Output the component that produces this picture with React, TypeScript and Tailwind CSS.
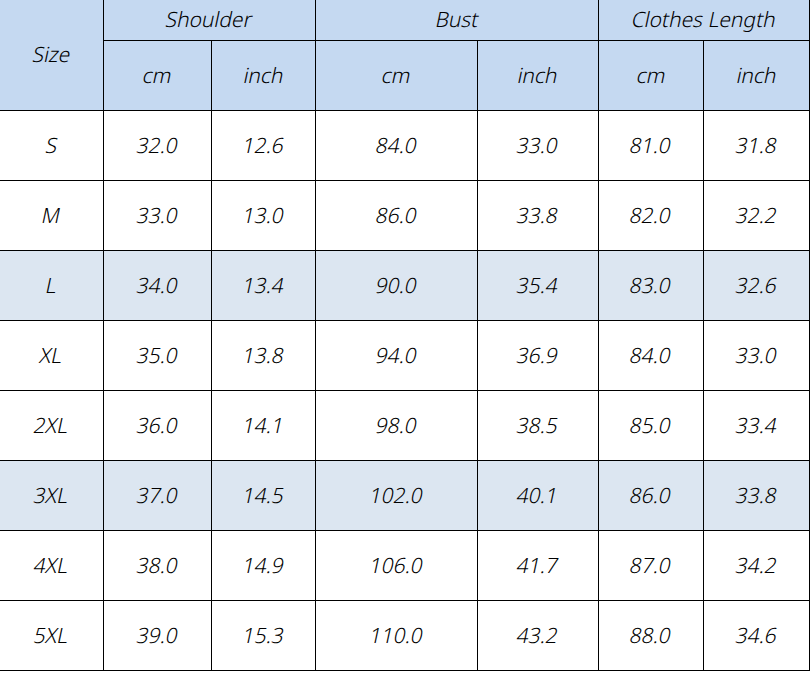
import React from "react";

const rows: [string, string, string, string, string, string, string][] = [
  ["S", "32.0", "12.6", "84.0", "33.0", "81.0", "31.8"],
  ["M", "33.0", "13.0", "86.0", "33.8", "82.0", "32.2"],
  ["L", "34.0", "13.4", "90.0", "35.4", "83.0", "32.6"],
  ["XL", "35.0", "13.8", "94.0", "36.9", "84.0", "33.0"],
  ["2XL", "36.0", "14.1", "98.0", "38.5", "85.0", "33.4"],
  ["3XL", "37.0", "14.5", "102.0", "40.1", "86.0", "33.8"],
  ["4XL", "38.0", "14.9", "106.0", "41.7", "87.0", "34.2"],
  ["5XL", "39.0", "15.3", "110.0", "43.2", "88.0", "34.6"],
];

const cell = "flex items-center justify-center border-r border-b border-black";

function T({ children }: { children: React.ReactNode }) {
  return <span className="inline-block -skew-x-12">{children}</span>;
}

export default function App() {
  return (
    <div
      className="w-[812px] h-[674px] bg-white text-black text-[21px] font-[350]"
      style={{ fontFamily: '"Noto Sans", "Open Sans", sans-serif' }}
    >
      <div className="grid w-[810px] grid-cols-[104px_108px_104px_162px_121px_105px_106px] grid-rows-[41px_70px_repeat(8,70px)]">
        <div className={`${cell} row-span-2 bg-[#c5d9f1]`}>
          <T>Size</T>
        </div>
        <div className={`${cell} col-span-2 bg-[#c5d9f1]`}>
          <T>Shoulder</T>
        </div>
        <div className={`${cell} col-span-2 bg-[#c5d9f1]`}>
          <T>Bust</T>
        </div>
        <div className={`${cell} col-span-2 bg-[#c5d9f1]`}>
          <T>Clothes Length</T>
        </div>
        {["cm", "inch", "cm", "inch", "cm", "inch"].map((t, i) => (
          <div key={i} className={`${cell} bg-[#c5d9f1]`}>
            <T>{t}</T>
          </div>
        ))}
        {rows.map((r, ri) =>
          r.map((v, ci) => (
            <div
              key={`${ri}-${ci}`}
              className={`${cell} ${ri === 2 || ri === 5 ? "bg-[#dce6f1]" : "bg-white"}`}
            >
              <T>{v}</T>
            </div>
          ))
        )}
      </div>
    </div>
  );
}
